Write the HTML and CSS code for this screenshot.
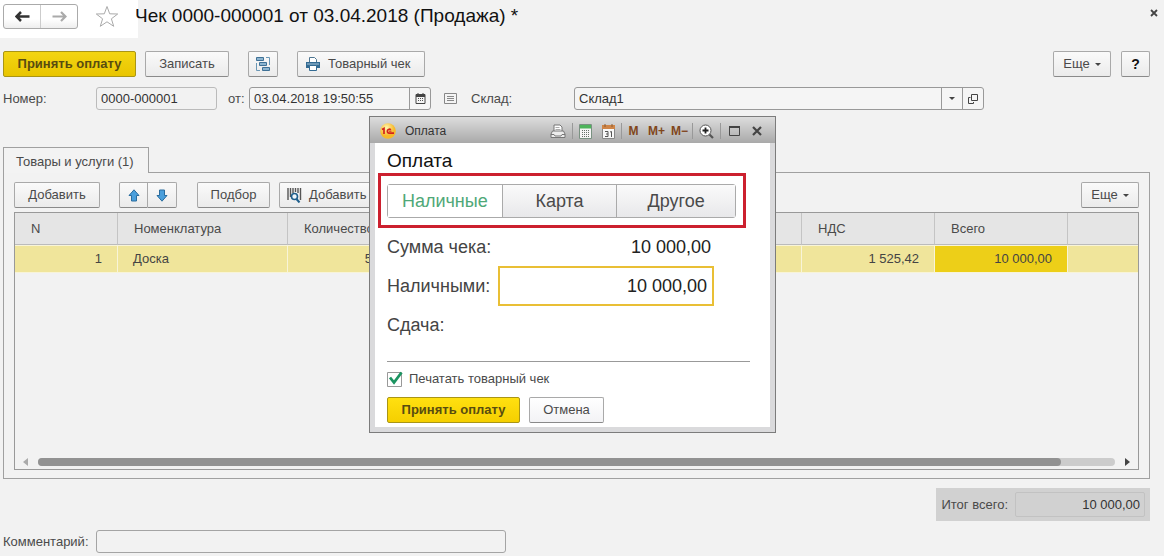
FILE: index.html
```html
<!DOCTYPE html>
<html lang="ru">
<head>
<meta charset="utf-8">
<meta name="viewport" content="width=device-width, initial-scale=1">
<title>Чек 0000-000001</title>
<link rel="stylesheet" href="styles.css">
</head>
<body>
<main class="window">
  <header class="header">
    <div class="nav">
      <button class="nav-btn" type="button" aria-label="Назад"><svg width="15" height="11" viewBox="0 0 15 11"><path d="M6 1 1.500 5.500 6 10M2 5.500h12.500" fill="none" stroke="#333" stroke-width="2.500"/></svg></button>
      <button class="nav-btn" type="button" aria-label="Вперед"><svg width="15" height="11" viewBox="0 0 15 11"><path d="M9 1l4.500 4.500L9 10M13 5.500H.5" fill="none" stroke="#aaa" stroke-width="2.200"/></svg></button>
    </div>
    <button class="plain star" type="button" aria-label="Избранное"><svg width="24" height="23" viewBox="0 0 24 23"><path d="M12 1.500l2.700 7.300 8 .2-6.300 4.800 2.300 7.500L12 16.800l-6.700 4.500 2.300-7.500L1.300 9l8-.2z" fill="#fff" stroke="#aaa"/></svg></button>
    <h1 class="title">Чек 0000-000001 от 03.04.2018 (Продажа) *</h1>
    <button class="plain close" type="button" aria-label="Закрыть"><svg width="8" height="8" viewBox="0 0 8 8"><path d="M1 1l6 6M7 1L1 7" stroke="#444" stroke-width="1.800"/></svg></button>
  </header>

  <div class="toolbar">
    <button class="btn primary" type="button">Принять оплату</button>
    <button class="btn save" type="button">Записать</button>
    <button class="btn icon-btn" type="button" aria-label="Структура подчиненности"><svg width="16" height="16" viewBox="0 0 16 16"><g fill="#8db5d0" stroke="#3f7196"><path d="M1.500 1.500h7v3h-7zM4.500 6.500h7v3h-7zM7.500 11.500h7v3h-7z"/></g><path d="M11 1.500h3.500V9M1.500 7v7.500H5" fill="none" stroke="#6a97b5"/></svg></button>
    <button class="btn print" type="button"><svg width="16" height="14" viewBox="0 0 16 14"><path d="M4.500 5V.5h5l2 2V5" fill="#fff" stroke="#4d7591"/><path d="M1 5h14v6H1z" fill="#336b93"/><path d="M2 7h12" stroke="#a9c7da"/><path d="M4.500 8.500h7v5h-7z" fill="#fff" stroke="#336b93"/></svg>Товарный чек</button>
    <button class="btn more push" type="button">Еще<span class="caret"></span></button>
    <button class="btn help" type="button">?</button>
  </div>

  <div class="fields">
    <label class="number-label" for="number">Номер:</label>
    <input class="field number" id="number" value="0000-000001" readonly>
    <label class="from-label" for="date">от:</label>
    <div class="combo date">
      <input id="date" value="03.04.2018 19:50:55">
      <button type="button" aria-label="Выбрать дату"><svg width="11" height="11" viewBox="0 0 11 11"><path d="M1 1.500h9v9H1z" fill="none" stroke="#444"/><path d="M1 3h9" stroke="#444" stroke-width="2"/><path d="M3 0v2M8 0v2" stroke="#444"/><path d="M3 5.500h6M3 7.500h6" stroke="#555" stroke-dasharray="1 1"/></svg></button>
    </div>
    <svg class="list-icon" width="13" height="11" viewBox="0 0 13 11"><path d="M.5.500h12v10H.5z" fill="#f4f4f4" stroke="#888"/><path d="M3 3.500h7M3 5.500h7M3 7.500h7" stroke="#888"/></svg>
    <label class="stock-label" for="stock">Склад:</label>
    <div class="combo stock">
      <input id="stock" value="Склад1">
      <button type="button" aria-label="Список"><span class="caret"></span></button>
      <button type="button" aria-label="Открыть"><svg width="10" height="10" viewBox="0 0 10 10"><path d="M3.500.500h6v6h-6zM2.500 3.500h-2v6h5V8" fill="none" stroke="#444"/></svg></button>
    </div>
  </div>

  <section class="goods">
    <button class="tab" type="button">Товары и услуги (1)</button>
    <div class="panel">
      <div class="panel-tools">
        <button class="btn add" type="button">Добавить</button>
        <div class="move">
          <button class="btn" type="button" aria-label="Вверх"><svg width="12" height="13" viewBox="0 0 12 13"><path d="M6 .8l5 5.700H8.500v5.500h-5V6.500H1z" fill="#4a9fdc" stroke="#2a6c9e"/></svg></button>
          <button class="btn" type="button" aria-label="Вниз"><svg width="12" height="13" viewBox="0 0 12 13"><path d="M6 12.200l5-5.700H8.500V1h-5v5.500H1z" fill="#4a9fdc" stroke="#2a6c9e"/></svg></button>
        </div>
        <button class="btn pick" type="button">Подбор</button>
        <button class="btn scan" type="button"><svg width="15" height="15" viewBox="0 0 15 15"><path d="M1 0v12M3.500 0v9M6 0v5M8.500 0v4M11 0v5M13.500 0v12" stroke="#555" stroke-width="1.400"/><circle cx="7.500" cy="8.500" r="3" fill="#eef5fa" stroke="#1f5f8c" stroke-width="1.600"/><path d="M9.500 11l3 3.500" stroke="#1f5f8c" stroke-width="2"/></svg>Добавить</button>
        <button class="btn more push" type="button">Еще<span class="caret"></span></button>
      </div>
      <div class="grid">
        <table class="table">
          <colgroup><col class="c-n"><col class="c-name"><col class="c-qty"><col class="c-gap"><col class="c-gap"><col class="c-gap"><col class="c-num"><col class="c-num"><col></colgroup>
          <thead><tr><th>N</th><th>Номенклатура</th><th>Количество</th><th></th><th></th><th></th><th>НДС</th><th>Всего</th><th></th></tr></thead>
          <tbody><tr><td class="num">1</td><td>Доска</td><td class="num">5</td><td></td><td></td><td></td><td class="num">1 525,42</td><td class="num current">10 000,00</td><td></td></tr></tbody>
        </table>
        <div class="scroll">
          <svg width="5" height="8" viewBox="0 0 5 8"><path d="M5 0v8L0 4z" fill="#aaa"/></svg>
          <div class="track"><div class="thumb"></div></div>
          <svg width="5" height="8" viewBox="0 0 5 8"><path d="M0 0v8l5-4z" fill="#444"/></svg>
        </div>
      </div>
    </div>
  </section>

  <div class="total">
    <label for="total">Итог всего:</label>
    <input id="total" value="10 000,00" readonly>
  </div>
  <div class="comment">
    <label for="comment">Комментарий:</label>
    <input class="field" id="comment">
  </div>
</main>

<div class="dialog" role="dialog" aria-labelledby="pay-title">
  <div class="dialog-bar">
    <svg width="16" height="16" viewBox="0 0 16 16"><defs><radialGradient id="sun" cx=".4" cy=".3"><stop offset="0" stop-color="#fff6b0"/><stop offset="1" stop-color="#f7b92a"/></radialGradient></defs><circle cx="8" cy="8" r="7.800" fill="url(#sun)"/><path d="M2 6.500l2-1V11M10.800 6.800a2 2 0 1 0-1.600 3.400h4.800" fill="none" stroke="#d3241c" stroke-width="1.700"/><path d="M9 8.200h2.500" stroke="#d3241c"/></svg>
    <span class="dialog-name">Оплата</span>
    <div class="tools">
      <button class="plain" type="button" aria-label="Печать"><svg width="16" height="15" viewBox="0 0 16 15"><path d="M4 7V1h6l2 2v4" fill="#fff" stroke="#777"/><path d="M5.500 3.500h4M5.500 5.500h5" stroke="#aaa"/><path d="M2.500 7h11l1.500 3v3.500H1V10z" fill="#ececec" stroke="#777"/><path d="M1 10.500h3l1 1.500h6l1-1.500h3" fill="none" stroke="#777"/></svg></button>
      <span class="sep"></span>
      <button class="plain" type="button" aria-label="Калькулятор"><svg width="13" height="15" viewBox="0 0 13 15"><path d="M.5.500h12v14H.5z" fill="#f5f5f5" stroke="#799181"/><path d="M1 1h11v3.500H1z" fill="#4eb45b"/><path d="M3 6.500h8M3 8.500h8M3 10.500h8M3 12.500h8" stroke="#657068" stroke-dasharray="1 1"/></svg></button>
      <button class="plain t-cal" type="button" aria-label="Календарь"><svg width="13" height="15" viewBox="0 0 13 15"><path d="M.5 1.500h12v13H.5z" fill="#f8f8f8" stroke="#888"/><path d="M0 1h13v4H0z" fill="#cf8547"/><path d="M3 0v3M10 0v3" stroke="#8a5a30"/><path d="M3 7.500h3v5H3M4 10h2M8 8l1.500-.5V13" fill="none" stroke="#555"/></svg></button>
      <span class="sep before-mem"></span>
      <button class="plain mem" type="button">M</button>
      <button class="plain mem" type="button">M+</button>
      <button class="plain mem" type="button">M−</button>
      <span class="sep after-mem"></span>
      <button class="plain" type="button" aria-label="Масштаб"><svg width="15" height="15" viewBox="0 0 15 15"><circle cx="6.500" cy="6.500" r="5.500" fill="#fff" stroke="#555"/><path d="M3.500 6.500h6M6.500 3.500v6" stroke="#222" stroke-width="1.800"/><path d="M10.500 10.500l3.500 3.500" stroke="#555" stroke-width="2.200"/></svg></button>
      <span class="sep"></span>
      <button class="plain t-max" type="button" aria-label="Развернуть"><svg width="11" height="10" viewBox="0 0 11 10"><path d="M.5 1h10v8.500H.5z" fill="none" stroke="#444"/><path d="M0 1h11" stroke="#444" stroke-width="2"/></svg></button>
      <button class="plain" type="button" aria-label="Закрыть окно"><svg width="10" height="10" viewBox="0 0 10 10"><path d="M1 1l8 8M9 1L1 9" stroke="#444" stroke-width="2.200"/></svg></button>
    </div>
  </div>
  <div class="dialog-body">
    <h2 class="pay-title" id="pay-title">Оплата</h2>
    <div class="mark">
      <div class="segments">
        <button class="on" type="button">Наличные</button>
        <button type="button">Карта</button>
        <button type="button">Другое</button>
      </div>
    </div>
    <div class="sums">
      <span>Сумма чека:</span><output class="sum">10 000,00</output>
      <label for="cash">Наличными:</label><input class="cash" id="cash" value="10 000,00">
      <span>Сдача:</span><output class="sum"></output>
    </div>
    <hr class="line">
    <label class="check"><input type="checkbox" checked><svg width="16" height="16" viewBox="0 0 16 16"><path d="M.5 1.500h14v14H.5z" fill="#fff" stroke="#999"/><path d="M3 6.500l4 5L14.500 1.500" fill="none" stroke="#1c9461" stroke-width="2.800"/></svg>Печатать товарный чек</label>
    <div class="actions">
      <button class="btn primary" type="button">Принять оплату</button>
      <button class="btn cancel" type="button">Отмена</button>
    </div>
  </div>
</div>
</body>
</html>
```
FILE: styles.css
```css
* { box-sizing: border-box; }
body {
  margin: 0;
  background: #f2f2f2;
  color: #4a4a4a;
  font: 13px/16px "Liberation Sans", Arial, sans-serif;
}
button, input { font: inherit; color: inherit; margin: 0; }
button { padding: 0; }
svg { display: block; flex: none; }
h1, h2 { margin: 0; font-weight: normal; color: #111; }

.window { display: flex; flex-direction: column; min-height: 100vh; padding-bottom: 3px; }

.header {
  display: flex;
  align-items: center;
  height: 38px;
  padding: 0 6px 6px 3px;
  background: linear-gradient(#fff, #fff) no-repeat 0 0 / 138px 100%;
}
.nav { display: flex; width: 75px; height: 25px; border: 1px solid #aaa; border-radius: 3px; background: linear-gradient(#fff 60%, #eee); }
.nav-btn { flex: 1; display: grid; place-items: center; border: 0; background: none; }
.nav-btn + .nav-btn { border-left: 1px solid #ccc; }
.plain { display: grid; place-items: center; border: 0; background: none; }
.star { margin: 0 16px 0 17px; }
.title { flex: 1; font-size: 19px; line-height: 20px; }
.close { align-self: flex-start; margin-top: 9px; }

.btn {
  display: inline-flex;
  align-items: center;
  justify-content: center;
  height: 26px;
  border: 1px solid #a9a9a9;
  border-bottom-color: #8a8a8a;
  border-radius: 2px;
  background: linear-gradient(#fafafa, #ebebeb);
  white-space: nowrap;
}
.primary { width: 133px; border-color: #a99515; background: linear-gradient(#f3d512, #e9c500); color: #584c10; font-weight: bold; }
.toolbar { display: flex; margin-top: 13px; padding: 0 14px 0 3px; }
.save { width: 84px; margin-left: 9px; }
.icon-btn { width: 30px; margin-left: 19px; }
.print { justify-content: flex-start; width: 128px; margin-left: 19px; padding-left: 7px; gap: 7px; }
.more { width: 58px; gap: 5px; }
.push { margin-left: auto; }
.help { width: 29px; margin-left: 10px; color: #111; font-size: 14px; font-weight: bold; }
.caret { width: 6px; border: 3px solid transparent; border-top-color: #444; border-bottom: 0; }

.fields { display: flex; align-items: center; margin-top: 10px; padding-left: 3px; }
.field { height: 23px; padding: 0 4px; border: 1px solid #a4a4a4; border-radius: 3px; background: transparent; }
.fields input { color: #333; }
.number-label { width: 93px; }
.number { width: 121px; border-color: #bbb; }
.from-label { width: 32px; padding-left: 11px; }
.combo { display: flex; height: 23px; border: 1px solid #999; border-radius: 3px; background: #f5f5f5; }
.combo input { flex: 1; min-width: 0; padding: 0 4px; border: 0; background: none; }
.combo button { display: grid; place-items: center; width: 21px; border: 0; border-left: 1px solid #999; background: none; }
.date { width: 182px; }
.list-icon { margin-left: 13px; }
.stock-label { width: 117px; padding-left: 14px; }
.stock { width: 410px; }

.goods { flex: 1; display: flex; flex-direction: column; align-items: flex-start; margin: 37px 14px 0 3px; }
.tab { height: 26px; margin-bottom: -1px; padding: 2px 14px 0 12px; border: 1px solid #a0a0a0; border-bottom: 0; background: #f3f3f3; position: relative; }
.panel { flex: 1; align-self: stretch; display: flex; flex-direction: column; padding: 9px 10px 8px; border: 1px solid #a0a0a0; }
.panel-tools { display: flex; }
.add { width: 86px; }
.move { display: flex; margin-left: 19px; }
.move .btn { width: 29px; border-radius: 2px 0 0 2px; }
.move .btn + .btn { border-left: 0; border-radius: 0 2px 2px 0; }
.pick { width: 73px; margin-left: 20px; }
.scan { justify-content: flex-start; width: 103px; margin-left: 9px; padding-left: 7px; gap: 7px; }
.grid { flex: 1; display: flex; flex-direction: column; justify-content: space-between; margin-top: 4px; border: 1px solid #999; }
.table { width: 100%; table-layout: fixed; border-collapse: separate; border-spacing: 0; }
.c-n { width: 103px; }
.c-name { width: 170px; }
.c-qty { width: 100px; }
.c-num { width: 133px; }
.c-gap { width: 138px; }
.table th { height: 32px; padding: 0 16px; border-right: 1px solid #c4c4c4; border-bottom: 1px solid #bbb; background: #e5e5e5; font-weight: normal; text-align: left; }
.table td { height: 28px; padding: 0 15px; border: 1px solid #f8f4d8; border-left: 0; background: #f0e59b; color: #444; }
.table th:last-child, .table td:last-child { border-right: 0; }
.table .num { text-align: right; }
.table .current { background: #edcf18; }
.scroll { display: flex; align-items: center; gap: 10px; padding: 0 8px 3px; }
.track { flex: 1; height: 8px; border-radius: 4px; background: #ccc; }
.thumb { width: 95%; height: 8px; border-radius: 4px; background: #929292; }

.total { display: flex; align-items: center; align-self: flex-end; gap: 7px; margin: 9px 14px 0 0; padding: 4px 5px; background: #d1d1d1; }
.total input { width: 130px; height: 25px; padding: 0 4px; border: 1px solid #c2c2c2; border-radius: 2px; background: none; color: #333; text-align: right; }
.comment { display: flex; align-items: center; margin-top: 9px; padding-left: 3px; }
.comment label { width: 93px; }
.comment .field { width: 410px; }

.dialog { position: absolute; top: 116px; left: 369px; width: 407px; padding: 0 5px 5px; border: 1px solid #7c7c7c; background: #dadadc; }
.dialog-bar { display: flex; align-items: center; height: 26px; margin: 0 -5px; padding: 2px 13px 0 10px; background: linear-gradient(#ddd, #a9a9a9); }
.dialog-name { margin-left: 9px; color: #333; font-size: 12px; }
.tools { display: flex; align-items: center; margin-left: auto; }
.sep { width: 1px; height: 16px; margin: 0 6px; background: #999; }
.before-mem { margin-right: 0; }
.after-mem { margin-left: 1px; }
.t-cal { margin-left: 10px; }
.mem { width: 23px; color: #80461b; font-size: 12px; font-weight: bold; }
.t-max { margin: 0 12px 0 2px; }
.dialog-body { padding: 8px 20px 4px 12px; background: #fff; }
.pay-title { font-size: 19px; line-height: 20px; }
.mark { margin: 2px -16px 0 -9px; width: 368px; padding: 8px 7px 7px 6px; border: 3px solid #cc202f; }
.segments { display: grid; grid-template-columns: 114fr 115fr 119fr; border: 1px solid #aaa; border-radius: 3px; }
.segments button { height: 32px; border: 0; border-left: 1px solid #aaa; background: linear-gradient(#fafafa, #e8e8ea); font-size: 18px; }
.segments .on { border-left: 0; background: #fff; color: #4fa878; }
.sums { display: grid; grid-template-columns: 111px 216px; align-items: center; font-size: 18px; line-height: 38px; color: #444; }
.sum, .cash { color: #222; text-align: right; }
.sum { padding-right: 3px; }
.cash { height: 40px; padding: 0 5px; border: 2px solid #e9bf35; background: #fff; }
.line { margin: 17px 0 0; border: 0; border-top: 1px solid #999; }
.check { display: flex; align-items: center; gap: 6px; margin-top: 9px; }
.check input { position: absolute; opacity: 0; }
.actions { display: flex; gap: 9px; margin-top: 10px; }
.actions .primary { background: linear-gradient(#ffe010, #f5cf00); }
.cancel { width: 75px; background: linear-gradient(#fff, #f3f3f5); }
```
